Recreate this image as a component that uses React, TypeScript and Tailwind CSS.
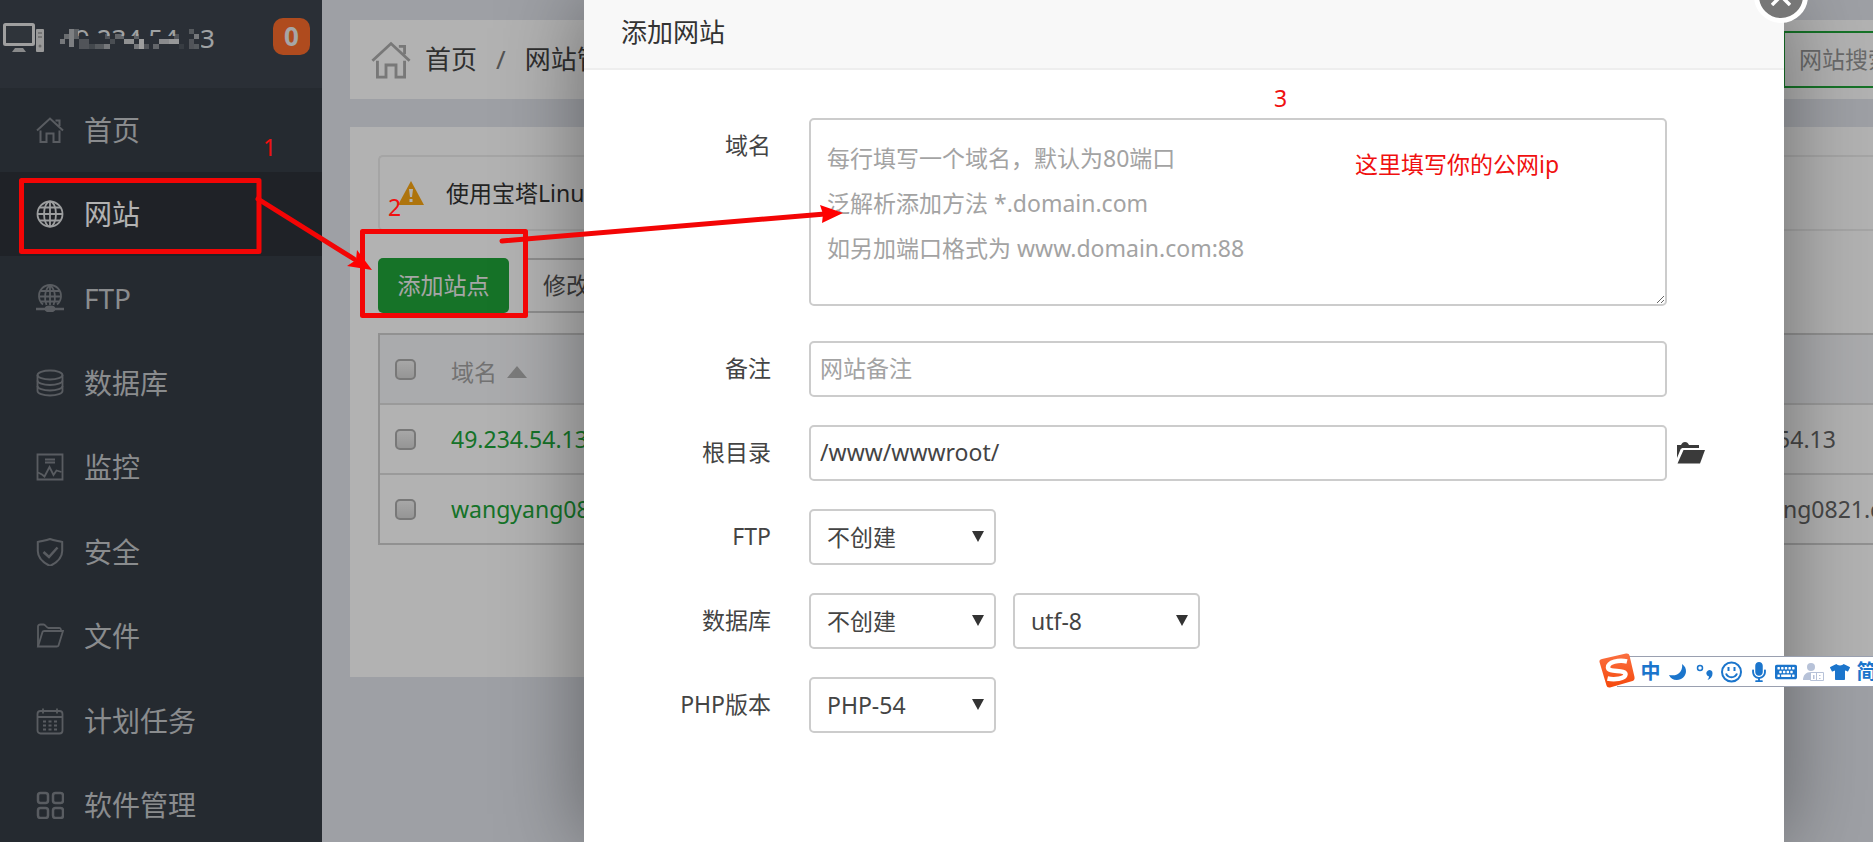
import { useState } from "react";
import type { ReactNode } from "react";
import { FaKeyboard, FaMicrophone, FaTshirt } from "react-icons/fa";

const HouseIcon = ({ className }: { className: string }) => (
  <svg viewBox="0 0 28 28" className={className} fill="none" stroke="currentColor" strokeWidth="2">
    <path d="M1 14.500 14 2.500l13 12M19.500 4.500h4V10" />
    <path d="M4.500 14.500V26h6v-8.500h7V26h6V14.500" />
  </svg>
);

const icons: Record<string, ReactNode> = {
  site: (
    <>
      <circle cx="14" cy="14" r="12.500" />
      <ellipse cx="14" cy="14" rx="6" ry="12.500" />
      <path d="M14 1.500v25M1.500 14h25M3.500 7.500h21M3.500 20.500h21" />
    </>
  ),
  ftp: (
    <>
      <path d="M7 20.500a11 11 0 1 1 14 0" />
      <path d="M10.500 21C8 15 8.500 5 14 1.500 19.500 5 20 15 17.500 21M14 1.500V21M3.500 12.500h21M5 7h18M5 17.500h18" />
      <path d="M0 25h28" strokeWidth="2.500" />
      <ellipse cx="14" cy="25" rx="4.500" ry="2.500" fill="currentColor" />
    </>
  ),
  database: (
    <>
      <ellipse cx="14" cy="6" rx="12.500" ry="4.500" />
      <path d="M1.500 6v16c0 2.500 5.500 4.500 12.500 4.500s12.500-2 12.500-4.500V6" />
      <path d="M1.500 11.500c0 2.500 5.500 4.500 12.500 4.500s12.500-2 12.500-4.500M1.500 17c0 2.500 5.500 4.500 12.500 4.500s12.500-2 12.500-4.500" />
    </>
  ),
  monitor: (
    <>
      <path d="M1.500 1.500h25v25h-25z" />
      <path d="M9 6.500h10M9 9.500h10" />
      <path d="M2 19.500l4 2 2.500 2 5-9.500 4 8 3-4.500 5 1.500" />
    </>
  ),
  security: (
    <>
      <path d="M14 1C10 2.500 5.500 3 1.800 4v9c0 7 5 11.500 12.200 15 7.200-3.500 12.200-8 12.200-15V4C22.500 3 18 2.500 14 1z" strokeWidth="2" />
      <path d="M7.500 14l5.500 5 8.500-9.500" strokeWidth="2.500" />
    </>
  ),
  files: (
    <>
      <path d="M2 24.500V4.500C2 3 3 2.500 4.500 2.500h3c2 0 3 3.500 5 3.500H23c1.500 0 2 .500 2 3" />
      <path d="M2 24.500 6.500 10c.3-1 .8-1 1.800-1H27l-4.500 14.500c-.3 1-.8 1-1.800 1z" />
    </>
  ),
  cron: (
    <>
      <rect x="1.500" y="4" width="25" height="22.500" rx="3" />
      <path d="M1.500 10h25M7 1.500v5M21 1.500v5M11 4h6" />
      <path d="M7 14.500h14M7 18.500h14M7 22.500h14" strokeDasharray="3 2.500" strokeWidth="2" />
    </>
  ),
  software: (
    <>
      <rect x="2" y="2" width="10" height="10" rx="2.500" strokeWidth="2.500" />
      <rect x="17" y="2" width="10" height="10" rx="2.500" strokeWidth="2.500" />
      <rect x="2" y="17" width="10" height="10" rx="2.500" strokeWidth="2.500" />
      <rect x="17" y="17" width="10" height="10" rx="2.500" strokeWidth="2.500" />
    </>
  ),
};

const menu = [
  { id: "home", name: "首页" },
  { id: "site", name: "网站" },
  { id: "ftp", name: "FTP" },
  { id: "database", name: "数据库" },
  { id: "monitor", name: "监控" },
  { id: "security", name: "安全" },
  { id: "files", name: "文件" },
  { id: "cron", name: "计划任务" },
  { id: "software", name: "软件管理" },
];

const sites = [
  { domain: "49.234.54.13", remark: "49.234.54.13" },
  { domain: "wangyang0821.com", remark: "wangyang0821.com" },
];

const checkboxClass =
  "block size-[21px] appearance-none rounded-[5px] border-2 border-[#acacac] bg-linear-to-b from-[#f0f0f0] to-[#d6d6d6] checked:bg-[#20a53a]";

const fieldClass =
  "w-full rounded-[5px] border-2 border-[#ccc] bg-white text-[#444] outline-none placeholder:text-[#a3a3a3] placeholder:opacity-100";

// x, y, width, height, opacity of the blocks hiding the address
const mosaic = [
  [0, 13, 5, 5, 0.6],
  [4, 8, 5, 5, 0.5],
  [9, 3, 5, 18, 0.65],
  [14, 3, 5, 10, 0.4],
  [19, 13, 10, 10, 0.3],
  [29, 18, 6, 5, 0.2],
  [35, 18, 9, 5, 0.35],
  [44, 18, 6, 5, 0.6],
  [45, 8, 5, 5, 0.3],
  [50, 13, 5, 5, 0.25],
  [55, 8, 9, 5, 0.45],
  [64, 13, 10, 5, 0.8],
  [74, 8, 5, 5, 0.4],
  [74, 18, 5, 5, 0.6],
  [79, 13, 5, 10, 0.9],
  [84, 18, 5, 5, 0.3],
  [93, 18, 6, 5, 0.45],
  [99, 13, 10, 5, 0.75],
  [109, 13, 10, 5, 0.85],
  [114, 8, 5, 5, 0.3],
  [119, 18, 5, 5, 0.1],
  [129, 3, 5, 5, 0.35],
  [129, 13, 5, 10, 0.3],
  [134, 8, 5, 5, 0.6],
  [134, 18, 5, 5, 0.35],
];

const Sidebar = () => (
  <aside className="w-[322px] shrink-0 bg-[#363d46]">
    <div className="flex h-[88px] items-start bg-[#3d444e] pt-[18px] pl-[3px] pr-3">
      <svg viewBox="0 0 42 32" className="mt-1 h-8 w-[42px] shrink-0">
        <rect x="1.500" y="2.500" width="29" height="20" rx="1" fill="#444b54" stroke="#e4e4e4" strokeWidth="3" />
        <path d="M12 26h8l3 4H9z" fill="#c4c6c8" />
        <rect x="33" y="7" width="8" height="23" rx="1" fill="#dcdcdc" />
        <path d="M35 11h4M35 15h4" stroke="#999" strokeWidth="1.500" />
        <circle cx="37" cy="24" r="1.500" fill="#999" />
      </svg>
      <div className="relative ml-[15px] flex-1 text-[26px] leading-10 text-[#e6e8ea]">
        49.234.54.13
        <svg viewBox="0 0 160 30" className="absolute top-2 left-0 h-[30px] w-40">
          <rect x="0" y="0" width="18" height="24" fill="#3d444e" />
          <rect x="0" y="10" width="141" height="14" fill="#3d444e" />
          <rect x="124" y="0" width="17" height="24" fill="#3d444e" />
          {mosaic.map(([x, y, w, h, o]) => (
            <rect key={`${x}-${y}`} x={x} y={y} width={w} height={h} fill="#f4f4f4" opacity={o} />
          ))}
        </svg>
      </div>
      <span className="flex size-[37px] items-center justify-center rounded-[10px] bg-[#fb6c2c] text-[26px] font-bold text-[#eee]">
        0
      </span>
    </div>
    <nav>
      {menu.map((item) => (
        <a
          key={item.id}
          href={`#${item.id}`}
          className={
            item.id === "site"
              ? "flex h-[84px] items-center gap-5 bg-[#2d3138] pl-9 text-[28px] text-white"
              : "flex h-[84px] items-center gap-5 pl-9 text-[28px] text-[#c6c9cc] even:h-[85px]"
          }
        >
          {item.id === "home" ? (
            <HouseIcon className="size-7 shrink-0 text-[#80858b]" />
          ) : (
            <svg
              viewBox="0 0 28 28"
              className={item.id === "site" ? "size-7 shrink-0 text-[#e0e2e4]" : "size-7 shrink-0 text-[#80858b]"}
              fill="none"
              stroke="currentColor"
              strokeWidth="1.800"
            >
              {icons[item.id]}
            </svg>
          )}
          {item.name}
        </a>
      ))}
    </nav>
  </aside>
);

const Sites = () => (
  <main className="min-w-0 flex-1 pt-5 pl-7">
    <div className="flex h-[79px] items-center overflow-hidden bg-white pl-[21px] text-[26px] text-[#444]">
      <HouseIcon className="size-10 shrink-0 text-[#acacac]" />
      <a href="#home" className="ml-3.5 shrink-0">首页</a>
      <span className="mx-[19px] text-[#777]">/</span>
      <span className="shrink-0">网站管理</span>
      <input
        aria-label="网站搜索"
        placeholder="网站搜索"
        className="-mr-[110px] ml-auto h-[57px] w-[200px] shrink-0 border-2 border-[#20a53a] px-3.5 pb-0.5 text-[23px] placeholder:text-[#999]"
      />
    </div>

    <div className="mt-7 min-h-[550px] overflow-hidden bg-white pt-7 pl-7 text-[23px]">
      <div className="flex h-[76px] items-center rounded-l-[5px] border-y-2 border-l-2 border-[#ececec] pl-[18px] text-[#333]">
        <svg viewBox="0 0 26 24" className="h-6 w-[26px]">
          <path d="M13 0 26 24H0z" fill="#faa614" />
          <path d="M11 8h4l-1 8h-2zM11.500 18h3v3h-3z" fill="#fff" />
        </svg>
        <span className="ml-[22px]">使用宝塔Linux面板创建站点</span>
      </div>

      <div className="mt-[27px] flex gap-3.5">
        <button className="h-[55px] w-[131px] rounded-[5px] bg-[#20a53a] text-[#eee]">添加站点</button>
        <button className="h-[55px] rounded-[5px] border-2 border-[#ccc] px-[18px] text-[#555]">修改默认页</button>
      </div>

      <div className="mt-5 border-y-2 border-l-2 border-[#d0d0d0]">
        <table className="w-full table-fixed border-separate border-spacing-0 text-left">
          <thead>
            <tr className="h-[70px] bg-[#f4f5f8] text-[#a4a4a4]">
              <th className="w-[71px] border-b-2 border-[#ddd] pl-[15px]">
                <input type="checkbox" aria-label="全选" className={checkboxClass} />
              </th>
              <th className="border-b-2 border-[#ddd] pt-1.5 font-normal">
                <span className="flex items-center gap-2.5">
                  域名
                  <svg viewBox="0 0 20 12" className="h-3 w-5">
                    <path d="M10 0 20 12H0z" fill="#b0b0b0" />
                  </svg>
                </span>
              </th>
              <th className="w-[174px] border-b-2 border-[#ddd]" />
            </tr>
          </thead>
          <tbody>
            {sites.map((site) => (
              <tr key={site.domain} className="group h-[70px] last:h-[68px]">
                <td className="border-b-2 border-[#ddd] pl-[15px] group-last:border-b-0">
                  <input type="checkbox" aria-label={site.domain} className={checkboxClass} />
                </td>
                <td className="border-b-2 border-[#ddd] group-last:border-b-0">
                  <a href="#site" className="text-[#20a53a]">{site.domain}</a>
                </td>
                <td className="border-b-2 border-[#ddd] text-[#666] group-last:border-b-0">{site.remark}</td>
              </tr>
            ))}
          </tbody>
        </table>
      </div>
    </div>
  </main>
);

type RowProps = { id: string; label: string; after?: ReactNode; children: ReactNode };

const Row = ({ id, label, after, children }: RowProps) => (
  <div className="flex">
    <label htmlFor={id} className="w-[187px] shrink-0 text-right leading-[54px]">{label}</label>
    <div className="ml-[38px] flex min-w-0 flex-1 gap-[17px]">{children}</div>
    <div className="flex w-[117px] shrink-0 items-center pl-2.5">{after}</div>
  </div>
);

type PickerProps = { id: string; label?: string; options: string[] };

const Picker = ({ id, label, options }: PickerProps) => (
  <div className="relative w-[187px]">
    <select id={id} aria-label={label} className={`${fieldClass} h-14 appearance-none px-4`}>
      {options.map((o) => (
        <option key={o}>{o}</option>
      ))}
    </select>
    <svg viewBox="0 0 12 11" className="pointer-events-none absolute top-[22px] right-3 h-[11px] w-3">
      <path d="M0 0h12L6 11z" fill="#333" />
    </svg>
  </div>
);

const AddSiteDialog = () => {
  const [path, setPath] = useState("/www/wwwroot/");

  return (
    <div className="absolute inset-0 bg-black/30 pr-[89px] pl-[584px]">
      <div role="dialog" aria-label="添加网站" className="relative min-h-full bg-white text-[23px] text-[#444] shadow-[0_0_80px_rgba(0,0,0,0.4)]">
        <h2 className="h-[70px] border-b-2 border-[#eee] bg-[#f8f8f8] pl-[37px] text-[26px] leading-[64px] text-[#333]">
          添加网站
        </h2>
        <button
          aria-label="关闭"
          className="absolute -top-[31px] -right-6 flex size-[54px] items-center justify-center rounded-full border-5 border-white bg-[#777]"
        >
          <svg viewBox="0 0 20 20" className="size-5" stroke="#fff" strokeWidth="3.500">
            <path d="M1 1l18 18M19 1 1 19" />
          </svg>
        </button>

        <form className="flex flex-col gap-7 pt-12">
          <div className="pb-[7px]">
            <Row id="domain" label="域名">
              <textarea
                id="domain"
                placeholder={"每行填写一个域名，默认为80端口\n泛解析添加方法 *.domain.com\n如另加端口格式为 www.domain.com:88"}
                className={`${fieldClass} h-[188px] px-4 py-4 leading-[45px]`}
              />
            </Row>
          </div>
          <Row id="remark" label="备注">
            <input id="remark" placeholder="网站备注" className={`${fieldClass} h-14 px-[9px] pb-0.5`} />
          </Row>
          <Row
            id="path"
            label="根目录"
            after={
              <button type="button" aria-label="选择目录" className="text-[#3a3a3a]">
                <svg viewBox="0 0 28 22" className="h-[22px] w-7" fill="currentColor">
                  <path d="M0 16V3h4c1-2 2-3 4-3s3 1 4 3h10v3H6c-1 0-2 .5-2.500 1.500z" />
                  <path d="M6.500 8H28l-5 13.500H.5z" />
                </svg>
              </button>
            }
          >
            <input
              id="path"
              value={path}
              onChange={(e) => setPath(e.target.value)}
              className={`${fieldClass} h-14 px-[9px] pb-0.5`}
            />
          </Row>
          <Row id="ftp" label="FTP">
            <Picker id="ftp" options={["不创建", "创建"]} />
          </Row>
          <Row id="database" label="数据库">
            <Picker id="database" options={["不创建", "MySQL"]} />
            <Picker id="charset" label="编码" options={["utf-8", "gbk"]} />
          </Row>
          <Row id="php" label="PHP版本">
            <Picker id="php" options={["PHP-54", "PHP-56"]} />
          </Row>
        </form>
      </div>
    </div>
  );
};

const Annotations = () => (
  <div className="pointer-events-none absolute inset-0 text-[23px] leading-8 text-[#f01010]">
    <svg width="900" height="340" viewBox="0 0 900 340" fill="none" stroke="#f30505" strokeWidth="5" strokeLinejoin="round">
      <rect x="21.500" y="180.500" width="237.500" height="71" />
      <rect x="362.500" y="231.500" width="163" height="84" />
      <path d="M258 199 354 259M502 241 825 214" strokeLinecap="round" />
      <path d="M372 270 347 266l9-6 1-10zM843 213l-23-8 3 9-1 9z" fill="#f00" stroke="none" />
    </svg>
    <span className="absolute top-[131px] left-[263px]">1</span>
    <span className="absolute top-[191px] left-[388px]">2</span>
    <span className="absolute top-[82px] left-[1274px]">3</span>
    <span className="absolute top-[148px] left-[1355px]">这里填写你的公网ip</span>
  </div>
);

const ImeBar = () => (
  <div className="absolute top-[656px] right-0 flex h-[31px] w-[256px] items-center border-y border-[#9aa0b0] bg-white pl-5 text-xl font-bold text-[#1b75cc]">
    <svg viewBox="0 0 36 36" className="absolute -top-1 -left-[18px] size-9">
      <defs>
        <linearGradient id="ime" x1="0" y1="0" x2="0" y2="1">
          <stop offset="0" stopColor="#fb7040" />
          <stop offset="1" stopColor="#f5480c" />
        </linearGradient>
      </defs>
      <path d="M3 6 27 .5q3-.500 3.500 2L35.500 24q.5 3-2 4L11 34.500q-3 .5-3.500-2L.5 9q-.5-2.500 2.500-3z" fill="url(#ime)" />
      <path
        d="M28 8.500C20 6.500 9 9 9 14.500 9 20 27 16 26.500 21.500 26 26 15 27 8.500 25.500"
        fill="none"
        stroke="#fff"
        strokeWidth="4.500"
      />
    </svg>
    <span className="w-[27px] shrink-0 text-center">中</span>
    <svg viewBox="0 0 27 20" className="h-5 w-[27px] shrink-0" fill="currentColor">
      <path d="M18 2c6 4 5 12-1 15-5 2.500-10 .5-12-4 5 1 9 0 11.500-3.500C18 7 18.500 4.500 18 2z" />
    </svg>
    <svg viewBox="0 0 27 20" className="h-5 w-[27px] shrink-0">
      <circle cx="9" cy="6" r="2.500" fill="none" stroke="currentColor" strokeWidth="1.500" />
      <path d="M17 8.500a3 3 0 0 1 4.500 3c0 3-2 5.500-5 6.500 1-1.500 1.500-2.500 1.500-3.500a3.200 3.200 0 0 1-1-6z" fill="currentColor" />
    </svg>
    <svg viewBox="0 0 27 22" className="h-[22px] w-[27px] shrink-0" fill="none" stroke="currentColor" strokeWidth="2">
      <circle cx="13.500" cy="11" r="9.500" />
      <path d="M10.500 6v4M16.500 6v4M8 12.500c2 5 9 5 11 0" />
    </svg>
    <span className="flex w-[27px] shrink-0 justify-center">
      <FaMicrophone className="size-5" />
    </span>
    <span className="flex w-[27px] shrink-0 justify-center">
      <FaKeyboard className="size-[22px]" />
    </span>
    <svg viewBox="0 0 27 20" className="h-5 w-[27px] shrink-0" fill="#b7c2d8">
      <circle cx="12" cy="5" r="4" />
      <path d="M4 18c0-5 3-8 8-8v8z" />
      <path d="M11.500 10.500h13v8h-13zM17.500 10.500v8" fill="#fff" stroke="#b7c2d8" />
      <path d="M14 13h1.500v4H14zM20 13h1.500v1H20zM20 16h1.500v1H20z" />
    </svg>
    <span className="flex w-[27px] shrink-0 justify-center">
      <FaTshirt className="size-5" />
    </span>
    <span className="w-[27px] shrink-0 text-center">简</span>
  </div>
);

const App = () => {
  return (
    <div
      lang="zh-CN"
      className="relative flex h-screen overflow-hidden bg-[#e3e6ed] font-['Noto_Sans','Noto_Sans_CJK_SC',sans-serif]"
    >
      <Sidebar />
      <Sites />
      <AddSiteDialog />
      <Annotations />
      <ImeBar />
    </div>
  );
};

export default App;
